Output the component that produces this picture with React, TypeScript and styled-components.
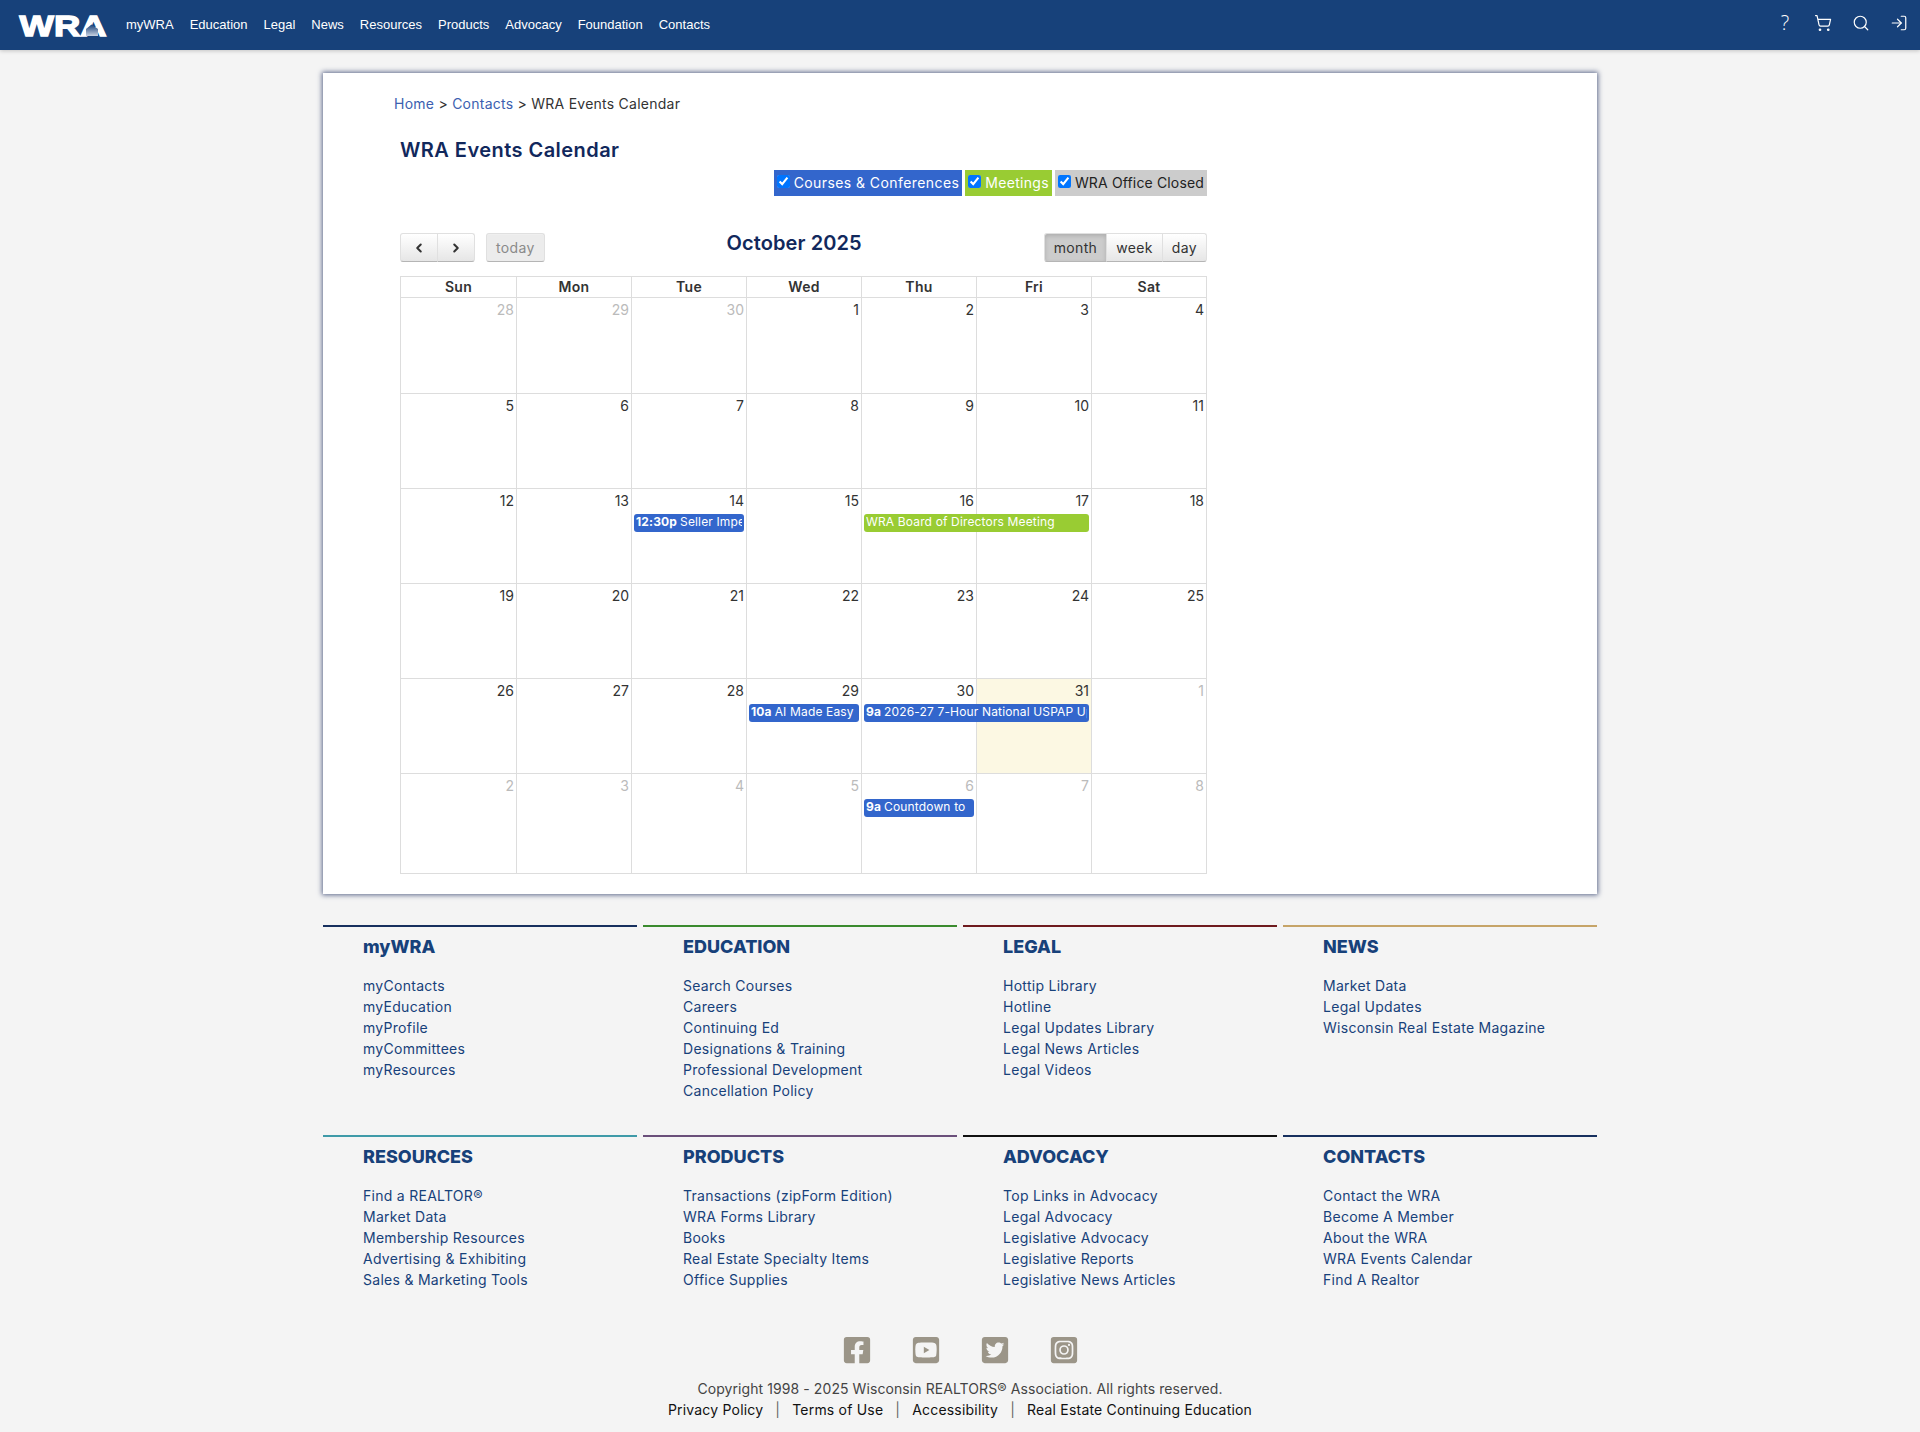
import React from "react";
import styled, { createGlobalStyle } from "styled-components";
import { ChevronLeft, ChevronRight, LogIn, Search, ShoppingCart } from "lucide-react";
import { FaFacebookSquare, FaInstagramSquare, FaTwitterSquare, FaYoutubeSquare } from "react-icons/fa";

const GlobalStyle = createGlobalStyle`
  html, body {
    margin: 0;
    padding: 0;
    background: #f4f4f4;
    font-family: "Inter", "Noto Sans", sans-serif;
    font-size: 14px;
    color: #333;
  }
  a {
    text-decoration: none;
    color: inherit;
  }
`;

const TopBar = styled.header`
  height: 50px;
  background: #17417a;
  display: flex;
  align-items: center;
  padding: 0 12px 0 19px;
  box-shadow: 0 1px 4px rgba(0, 0, 0, 0.2);
`;

const Logo = styled.svg`
  width: 88px;
  height: 22px;
  margin-right: 19px;
  flex: none;
  overflow: visible;
`;

const LogoText = styled.text`
  font-family: "Liberation Sans", sans-serif;
  font-weight: 700;
  font-size: 30px;
  fill: #fff;
  stroke: #fff;
  stroke-width: 1.4px;
`;

const Nav = styled.nav`
  display: flex;
  gap: 16px;
  padding-bottom: 2px;
  font-family: "Liberation Sans", Arial, sans-serif;
  font-size: 13px;
  color: #fff;
`;

const TopIcons = styled.div`
  margin-left: auto;
  display: flex;
  align-items: center;
  gap: 20px;
  padding-bottom: 4px;
  color: #fff;
`;

const QuestionMark = styled.span`
  width: 18px;
  text-align: center;
  font-family: "Open Sans", sans-serif;
  font-weight: 300;
  font-size: 20px;
  line-height: 18px;
`;

const Card = styled.main`
  width: 1274px;
  height: 821px;
  box-sizing: border-box;
  margin: 23px auto 0;
  padding: 21px 0 0 71px;
  background: #fff;
  box-shadow: 0 0 5px 1px #5b678a;
`;

const Breadcrumb = styled.div`
  font-size: 14px;
  line-height: 20px;
  letter-spacing: 0.25px;
  color: #333;
`;

const CrumbLink = styled.a`
  color: #3c5fb0;
`;

const Calendar = styled.section`
  width: 807px;
  margin: 21px 0 0 6px;
`;

const PageTitle = styled.h1`
  margin: 0;
  font-size: 20px;
  line-height: 30px;
  font-weight: 600;
  letter-spacing: 0.45px;
  color: #11285c;
`;

const Legend = styled.div`
  display: flex;
  justify-content: flex-end;
  gap: 3px;
  margin-top: 5px;
`;

const LegendItem = styled.label<{ $bg: string; $fg: string; $tracking: number }>`
  display: flex;
  align-items: flex-start;
  height: 26px;
  box-sizing: border-box;
  padding-right: 3px;
  background: ${({ $bg }) => $bg};
  color: ${({ $fg }) => $fg};
  font-size: 14px;
  line-height: 26px;
  letter-spacing: ${({ $tracking }) => $tracking}px;
`;

const LegendCheck = styled.input`
  width: 13px;
  height: 13px;
  margin: 5px 4px 0 3px;
`;

const Toolbar = styled.div`
  display: flex;
  justify-content: space-between;
  align-items: flex-start;
  margin-top: 37px;
`;

const ToolGroup = styled.div`
  display: flex;
  gap: 11px;
`;

const ButtonGroup = styled.div`
  display: flex;
`;

const ToolButton = styled.button<{ $active?: boolean; $muted?: boolean; $first?: boolean; $last?: boolean }>`
  height: 29px;
  box-sizing: border-box;
  display: flex;
  align-items: center;
  justify-content: center;
  padding: 0 9px;
  margin-left: ${({ $first }) => ($first ? "0" : "-1px")};
  font-family: inherit;
  font-size: 14px;
  letter-spacing: 0.35px;
  color: ${({ $muted }) => ($muted ? "#8a8a8a" : "#333")};
  background: ${({ $active, $muted }) =>
    $active ? "#cccccc" : $muted ? "#ececec" : "linear-gradient(#ffffff, #e6e6e6)"};
  border: 1px solid #e0e0e0;
  border-bottom-color: #b5b5b5;
  border-radius: ${({ $first, $last }) =>
    `${$first ? "3px" : "0"} ${$last ? "3px" : "0"} ${$last ? "3px" : "0"} ${$first ? "3px" : "0"}`};
  box-shadow: ${({ $active }) =>
    $active ? "inset 0 2px 4px rgba(0, 0, 0, 0.15)" : "inset 0 1px 0 rgba(255, 255, 255, 0.2)"};
`;

const NavButton = styled(ToolButton)`
  width: 38px;
  padding: 0;
`;

const MonthTitle = styled.h2`
  margin: -5px 0 0;
  font-size: 20px;
  line-height: 30px;
  font-weight: 600;
  letter-spacing: 0.1px;
  color: #11285c;
`;

const Grid = styled.div`
  margin-top: 14px;
  border: 1px solid #ddd;
  border-bottom: 0;
`;

const HeadRow = styled.div`
  display: grid;
  grid-template-columns: repeat(7, 1fr);
  height: 20px;
  border-bottom: 1px solid #ddd;
`;

const HeadCell = styled.div`
  text-align: center;
  font-size: 14px;
  line-height: 20px;
  font-weight: 600;
  letter-spacing: 0.3px;
  color: #333;
  border-left: 1px solid #ddd;
  &:first-child {
    border-left: 0;
  }
`;

const Week = styled.div<{ $height: number }>`
  display: grid;
  grid-template-columns: repeat(7, 1fr);
  grid-template-rows: 25px 18px 1fr;
  height: ${({ $height }) => $height}px;
  border-bottom: 1px solid #ddd;
`;

const DayCell = styled.div<{ $col: number; $today?: boolean; $faded?: boolean }>`
  grid-column: ${({ $col }) => $col};
  grid-row: 1 / -1;
  padding: 2px 2px 0 0;
  text-align: right;
  font-size: 14px;
  line-height: 20px;
  color: ${({ $faded }) => ($faded ? "#bbbbbb" : "#333")};
  background: ${({ $today }) => ($today ? "#fcf8e3" : "transparent")};
  border-left: ${({ $col }) => ($col === 1 ? "0" : "1px solid #ddd")};
`;

const EventBar = styled.div<{ $col: number; $span?: number; $bg: string }>`
  grid-column: ${({ $col, $span }) => `${$col} / span ${$span ?? 1}`};
  grid-row: 2;
  z-index: 1;
  min-width: 0;
  margin: 0 2px 0 3px;
  padding: 0 2px;
  height: 18px;
  border-radius: 3px;
  background: ${({ $bg }) => $bg};
  color: #fff;
  font-size: 12px;
  line-height: 16px;
  letter-spacing: 0.15px;
`;

const EventLabel = styled.div`
  white-space: nowrap;
  overflow: hidden;
`;

const EventTime = styled.strong`
  font-weight: 700;
  margin-right: 3px;
`;

const Footer = styled.footer`
  width: 1274px;
  margin: 31px auto 0;
`;

const FooterGrid = styled.div`
  display: grid;
  grid-template-columns: repeat(4, 1fr);
  column-gap: 6px;
`;

const FooterColumn = styled.div<{ $line: string }>`
  height: 210px;
  box-sizing: border-box;
  padding: 7px 0 0 40px;
  border-top: 2px solid ${({ $line }) => $line};
`;

const FooterHeading = styled.h3`
  margin: 0 0 16px;
  font-size: 18px;
  line-height: 25px;
  font-weight: 800;
  color: #17417a;
`;

const FooterLink = styled.a`
  display: block;
  font-size: 14px;
  line-height: 21px;
  letter-spacing: 0.28px;
  color: #17417a;
`;

const Social = styled.div`
  display: flex;
  justify-content: center;
  gap: 39px;
  color: #9b9588;
  font-size: 30px;
  line-height: 30px;
  margin-top: -10px;
`;

const Copyright = styled.div`
  margin-top: 13px;
  text-align: center;
  font-size: 14px;
  line-height: 21px;
  letter-spacing: 0.08px;
  color: #444;
`;

const LegalLinks = styled.div`
  display: flex;
  justify-content: center;
  gap: 12px;
  font-size: 14px;
  line-height: 21px;
  letter-spacing: 0.2px;
  color: #111;
`;

const Separator = styled.span`
  color: #666;
`;

const navItems = ["myWRA", "Education", "Legal", "News", "Resources", "Products", "Advocacy", "Foundation", "Contacts"];
const dayNames = ["Sun", "Mon", "Tue", "Wed", "Thu", "Fri", "Sat"];

const BLUE = "#3366cc";
const GREEN = "#99cc33";

const weeks = [
  [28, 29, 30, 1, 2, 3, 4],
  [5, 6, 7, 8, 9, 10, 11],
  [12, 13, 14, 15, 16, 17, 18],
  [19, 20, 21, 22, 23, 24, 25],
  [26, 27, 28, 29, 30, 31, 1],
  [2, 3, 4, 5, 6, 7, 8],
];

const weekHeights = [95, 94, 94, 94, 94, 99];

const weekEvents: { week: number; col: number; span?: number; bg: string; time?: string; title: string }[] = [
  { week: 2, col: 3, bg: BLUE, time: "12:30p", title: "Seller Impersonation Fraud" },
  { week: 2, col: 5, span: 2, bg: GREEN, title: "WRA Board of Directors Meeting" },
  { week: 4, col: 4, bg: BLUE, time: "10a", title: "AI Made Easy - Tools" },
  { week: 4, col: 5, span: 2, bg: BLUE, time: "9a", title: "2026-27 7-Hour National USPAP Update" },
  { week: 5, col: 5, bg: BLUE, time: "9a", title: "Countdown to" },
];

const footerColumns = [
  { title: "myWRA", line: "#17305e", links: ["myContacts", "myEducation", "myProfile", "myCommittees", "myResources"] },
  { title: "EDUCATION", line: "#3a8a2e", links: ["Search Courses", "Careers", "Continuing Ed", "Designations & Training", "Professional Development", "Cancellation Policy"] },
  { title: "LEGAL", line: "#6e1a1e", links: ["Hottip Library", "Hotline", "Legal Updates Library", "Legal News Articles", "Legal Videos"] },
  { title: "NEWS", line: "#c6a468", links: ["Market Data", "Legal Updates", "Wisconsin Real Estate Magazine"] },
  { title: "RESOURCES", line: "#3f9aa8", links: ["Find a REALTOR®", "Market Data", "Membership Resources", "Advertising & Exhibiting", "Sales & Marketing Tools"] },
  { title: "PRODUCTS", line: "#6a4f7a", links: ["Transactions (zipForm Edition)", "WRA Forms Library", "Books", "Real Estate Specialty Items", "Office Supplies"] },
  { title: "ADVOCACY", line: "#111111", links: ["Top Links in Advocacy", "Legal Advocacy", "Legislative Advocacy", "Legislative Reports", "Legislative News Articles"] },
  { title: "CONTACTS", line: "#17305e", links: ["Contact the WRA", "Become A Member", "About the WRA", "WRA Events Calendar", "Find A Realtor"] },
];

const isFaded = (week: number, day: number) => (week === 0 && day > 20) || (week >= 4 && day < 20);

const App: React.FC = () => (
  <>
    <GlobalStyle />
    <TopBar>
      <Logo viewBox="0 0 88 22">
        <defs>
          <linearGradient id="houseFade" x1="0" y1="0" x2="0" y2="1">
            <stop offset="0" stopColor="#17417a" />
            <stop offset="1" stopColor="#c8d2e2" />
          </linearGradient>
        </defs>
        <LogoText x="0.5" y="21.5" textLength="87" lengthAdjust="spacingAndGlyphs">
          WRA
        </LogoText>
        <path d="M72.5 10.5 L79 15 V22 H67 V15 Z" fill="url(#houseFade)" />
      </Logo>
      <Nav>
        {navItems.map((item) => (
          <a key={item}>{item}</a>
        ))}
      </Nav>
      <TopIcons>
        <QuestionMark>?</QuestionMark>
        <ShoppingCart size={18} strokeWidth={1.6} />
        <Search size={18} strokeWidth={1.6} />
        <LogIn size={18} strokeWidth={1.6} />
      </TopIcons>
    </TopBar>

    <Card>
      <Breadcrumb>
        <CrumbLink>Home</CrumbLink> &gt; <CrumbLink>Contacts</CrumbLink> &gt; WRA Events Calendar
      </Breadcrumb>
      <Calendar>
        <PageTitle>WRA Events Calendar</PageTitle>
        <Legend>
          <LegendItem $bg={BLUE} $fg="#fff" $tracking={0.42}>
            <LegendCheck type="checkbox" defaultChecked />
            Courses &amp; Conferences
          </LegendItem>
          <LegendItem $bg={GREEN} $fg="#fff" $tracking={0.3}>
            <LegendCheck type="checkbox" defaultChecked />
            Meetings
          </LegendItem>
          <LegendItem $bg="#cccccc" $fg="#222" $tracking={0.15}>
            <LegendCheck type="checkbox" defaultChecked />
            WRA Office Closed
          </LegendItem>
        </Legend>
        <Toolbar>
          <ToolGroup>
            <ButtonGroup>
              <NavButton $first aria-label="prev">
                <ChevronLeft size={14} strokeWidth={3.5} />
              </NavButton>
              <NavButton $last aria-label="next">
                <ChevronRight size={14} strokeWidth={3.5} />
              </NavButton>
            </ButtonGroup>
            <ToolButton $first $last $muted>
              today
            </ToolButton>
          </ToolGroup>
          <MonthTitle>October 2025</MonthTitle>
          <ToolGroup>
            <ButtonGroup>
              <ToolButton $first $active>
                month
              </ToolButton>
              <ToolButton>week</ToolButton>
              <ToolButton $last>day</ToolButton>
            </ButtonGroup>
          </ToolGroup>
        </Toolbar>
        <Grid>
          <HeadRow>
            {dayNames.map((name) => (
              <HeadCell key={name}>{name}</HeadCell>
            ))}
          </HeadRow>
          {weeks.map((days, w) => (
            <Week key={w} $height={weekHeights[w]}>
              {days.map((day, d) => (
                <DayCell key={d} $col={d + 1} $faded={isFaded(w, day)} $today={w === 4 && day === 31}>
                  {day}
                </DayCell>
              ))}
              {weekEvents
                .filter((ev) => ev.week === w)
                .map((ev) => (
                  <EventBar key={ev.title} $col={ev.col} $span={ev.span} $bg={ev.bg}>
                    <EventLabel>
                      {ev.time && <EventTime>{ev.time}</EventTime>}
                      {ev.title}
                    </EventLabel>
                  </EventBar>
                ))}
            </Week>
          ))}
        </Grid>
      </Calendar>
    </Card>

    <Footer>
      <FooterGrid>
        {footerColumns.map((col) => (
          <FooterColumn key={col.title} $line={col.line}>
            <FooterHeading>{col.title}</FooterHeading>
            {col.links.map((link) => (
              <FooterLink key={link}>{link}</FooterLink>
            ))}
          </FooterColumn>
        ))}
      </FooterGrid>
      <Social>
        <FaFacebookSquare />
        <FaYoutubeSquare />
        <FaTwitterSquare />
        <FaInstagramSquare />
      </Social>
      <Copyright>Copyright 1998 - 2025 Wisconsin REALTORS® Association. All rights reserved.</Copyright>
      <LegalLinks>
        <a>Privacy Policy</a>
        <Separator>|</Separator>
        <a>Terms of Use</a>
        <Separator>|</Separator>
        <a>Accessibility</a>
        <Separator>|</Separator>
        <a>Real Estate Continuing Education</a>
      </LegalLinks>
    </Footer>
  </>
);

export default App;
